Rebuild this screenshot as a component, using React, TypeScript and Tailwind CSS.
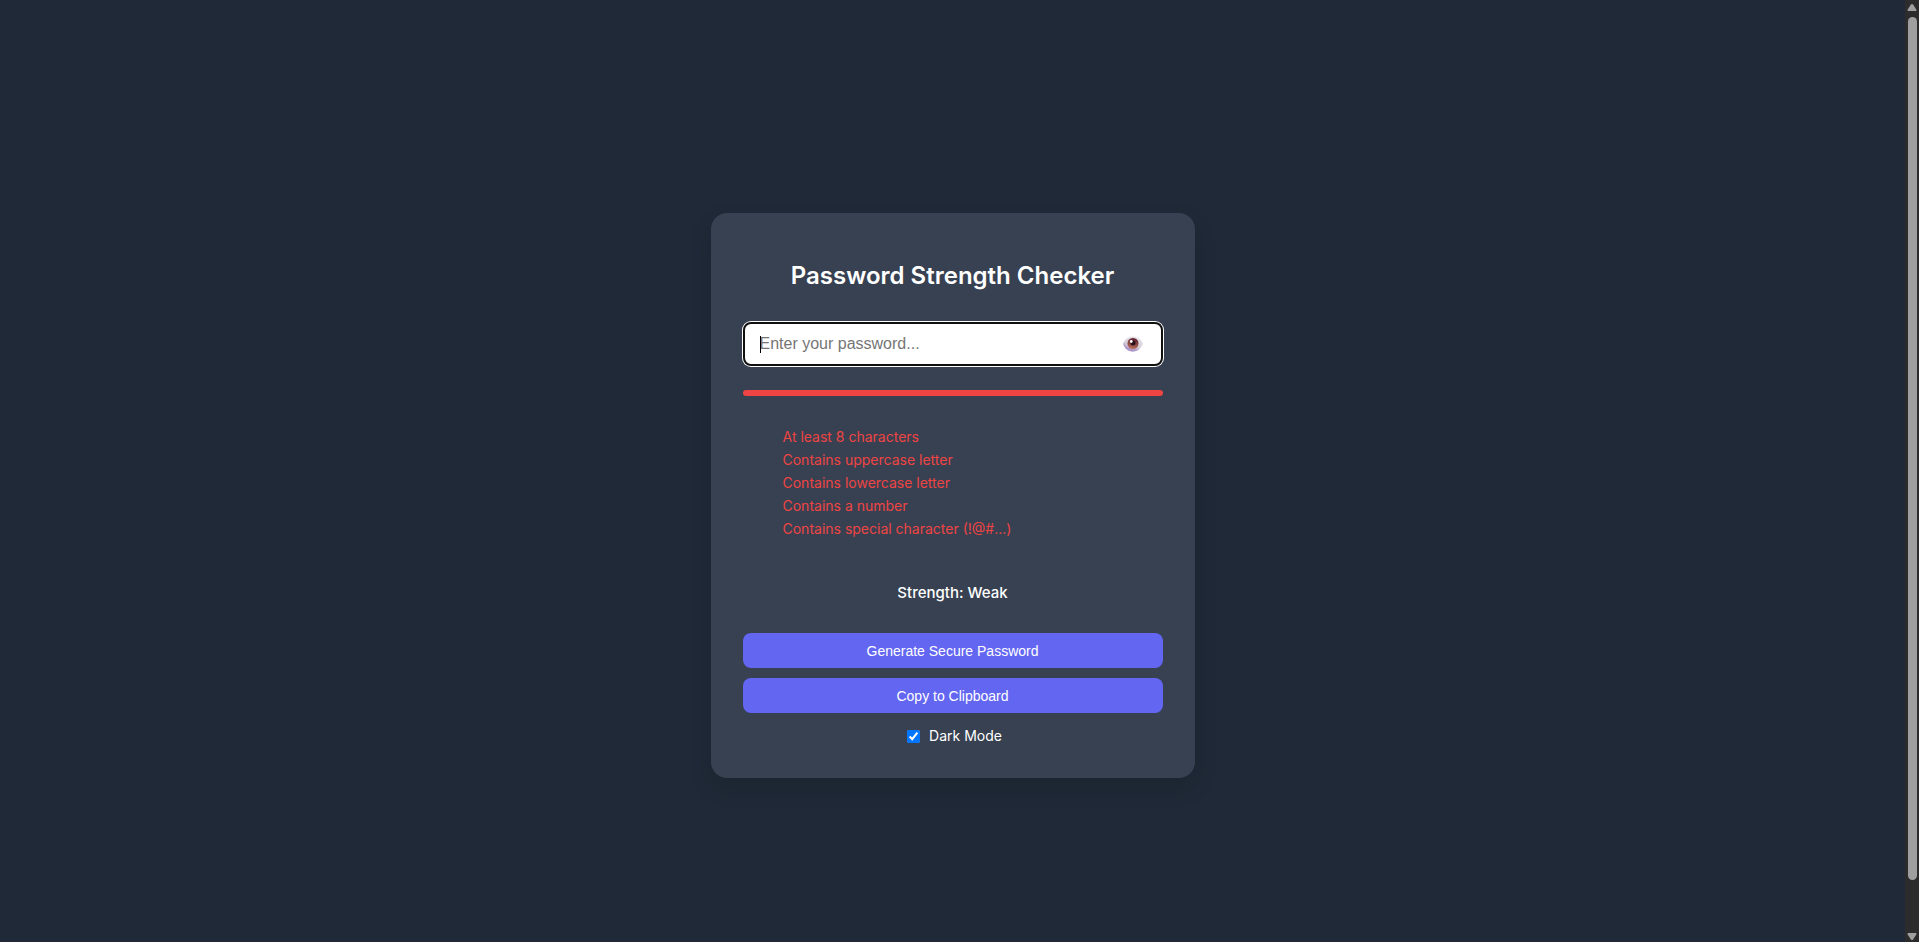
import { useEffect, useRef, useState } from "react";

const RULES: { label: string; test: (v: string) => boolean }[] = [
  { label: "At least 8 characters", test: (v) => v.length >= 8 },
  { label: "Contains uppercase letter", test: (v) => /[A-Z]/.test(v) },
  { label: "Contains lowercase letter", test: (v) => /[a-z]/.test(v) },
  { label: "Contains a number", test: (v) => /\d/.test(v) },
  { label: "Contains special character (!@#...)", test: (v) => /[^A-Za-z0-9]/.test(v) },
];

const ALPHABET = "ABCDEFGHIJKLMNOPQRSTUVWXYZabcdefghijklmnopqrstuvwxyz0123456789!@#$%^&*";

function generatePassword() {
  const bytes = crypto.getRandomValues(new Uint32Array(12));
  return "Aa1!" + Array.from(bytes, (b) => ALPHABET[b % ALPHABET.length]).join("");
}

function EyeIcon() {
  return (
    <svg viewBox="0 0 40 32" className="h-4 w-5" aria-hidden="true">
      <defs>
        <linearGradient id="eye-white" x1="0.8" y1="0" x2="0.3" y2="1">
          <stop offset="0" stopColor="#eae6e9" />
          <stop offset="0.55" stopColor="#d6cfda" />
          <stop offset="1" stopColor="#b09acb" />
        </linearGradient>
        <linearGradient id="eye-iris" x1="0.6" y1="0" x2="0.4" y2="1">
          <stop offset="0" stopColor="#5e1a2e" />
          <stop offset="0.5" stopColor="#8a4642" />
          <stop offset="1" stopColor="#bb705e" />
        </linearGradient>
      </defs>
      <path d="M0 15C4 6 12 1 20 1s16 5 20 14c-4 10-11 16-20 16S3 25 0 15Z" fill="url(#eye-white)" />
      <path d="M0 15c3 11 11 16 20 16 5 0 9-2 12-5-10 2-24 0-32-11Z" fill="#a58fc4" opacity="0.7" />
      <circle cx="20" cy="15" r="11" fill="url(#eye-iris)" />
      <circle cx="20" cy="14" r="5" fill="#2a1018" />
      <circle cx="16.500" cy="11" r="2.8" fill="#fff" />
    </svg>
  );
}

function ScrollRail({ ratio, offset }: { ratio: number; offset: number }) {
  return (
    <div className="flex h-full w-[14px] shrink-0 flex-col items-center bg-[#2c2c2c]" aria-hidden="true">
      <svg viewBox="0 0 14 17" className="h-[17px] w-[14px] shrink-0">
        <path d="M7 4c.5 0 .8.2 1.100.600l3.200 4.900c.5.8.1 1.500-.8 1.500h-7c-.9 0-1.300-.7-.8-1.500l3.200-4.900c.3-.4.600-.600 1.100-.600Z" fill="#9f9f9f" />
      </svg>
      <div className="w-[9px] min-h-0 flex-1">
        <div style={{ height: `${offset * 100}%` }} />
        <div className="rounded-full bg-[#9f9f9f]" style={{ height: `${ratio * 100}%` }} />
      </div>
      <svg viewBox="0 0 14 17" className="h-[17px] w-[14px] shrink-0">
        <path d="M7 15c.5 0 .8-.2 1.100-.600l3.200-4.900c.5-.8.1-1.500-.8-1.500h-7c-.9 0-1.300.7-.8 1.500l3.200 4.900c.3.4.600.600 1.100.600Z" fill="#9f9f9f" />
      </svg>
    </div>
  );
}

export default function App() {
  const [password, setPassword] = useState("");
  const [visible, setVisible] = useState(false);
  const [dark, setDark] = useState(true);
  const [rail, setRail] = useState({ ratio: 1, offset: 0 });
  const scroller = useRef<HTMLDivElement>(null);

  const measure = () => {
    const el = scroller.current;
    if (el) setRail({ ratio: el.clientHeight / el.scrollHeight, offset: el.scrollTop / el.scrollHeight });
  };

  useEffect(() => {
    measure();
    window.addEventListener("resize", measure);
    return () => window.removeEventListener("resize", measure);
  }, []);

  const score = RULES.filter((r) => r.test(password)).length;
  const strength = score <= 2 ? "Weak" : score <= 4 ? "Medium" : "Strong";
  const barColor = score <= 2 ? "bg-[#ef4444]" : score <= 4 ? "bg-[#f59e0b]" : "bg-[#10b981]";
  const buttonClass =
    "h-[35px] w-full cursor-pointer rounded-lg bg-[#6366f1] pt-px font-['Liberation_Sans',Arial,sans-serif] text-sm text-white hover:bg-[#4f46e5]";

  return (
    <div
      className={`flex h-screen font-[Inter,sans-serif] ${dark ? "bg-[#1f2937] text-white" : "bg-[#f3f4f6] text-[#1f2937]"}`}
    >
      <div ref={scroller} onScroll={measure} className="h-full min-w-0 flex-1 overflow-y-auto [scrollbar-width:none]">
        <main className="flex min-h-[calc(100vh+49px)] items-center justify-center py-6">
          <section
            className={`w-full max-w-[484px] rounded-2xl p-8 shadow-[0_10px_25px_rgba(0,0,0,0.1)] ${dark ? "bg-[#374151]" : "bg-white"}`}
          >
            <h1 className="mt-4 mb-[31px] text-center text-2xl leading-[30px] font-semibold">
              Password Strength Checker
            </h1>

            <div className="relative">
              <input
                type={visible ? "text" : "password"}
                aria-label="Password"
                placeholder="Enter your password..."
                autoFocus
                value={password}
                onChange={(e) => setPassword(e.target.value)}
                className="h-11 w-full rounded-lg border-2 border-[#101010] bg-white pr-12 pl-[15px] font-['Liberation_Sans',Arial,sans-serif] text-base text-black caret-transparent ring-1 ring-white outline-none not-placeholder-shown:caret-black placeholder:text-[#757575]"
              />
              {password === "" && (
                <span className="pointer-events-none absolute top-[14px] left-[17px] h-[17px] w-px bg-black" />
              )}
              <button
                type="button"
                aria-label="Show password"
                onClick={() => setVisible(!visible)}
                className="absolute inset-y-0 right-5 flex cursor-pointer items-center"
              >
                <EyeIcon />
              </button>
            </div>

            <div className={`mt-6 h-[6px] w-full rounded-full ${barColor}`} />

            <ul className="mt-[29px] pl-10 text-sm leading-[23px]">
              {RULES.map((r) => (
                <li key={r.label} className={r.test(password) ? "text-[#10b981]" : "text-[#ef4444]"}>
                  {r.label}
                </li>
              ))}
            </ul>

            <p className="mt-[41px] text-center text-[15px] leading-6 font-medium">Strength: {strength}</p>

            <div className="mt-7 flex flex-col gap-[10px]">
              <button type="button" className={buttonClass} onClick={() => setPassword(generatePassword())}>
                Generate Secure Password
              </button>
              <button type="button" className={buttonClass} onClick={() => navigator.clipboard?.writeText(password)}>
                Copy to Clipboard
              </button>
            </div>

            <label className="mt-[13px] flex items-center justify-center gap-[9px] text-sm">
              <input
                type="checkbox"
                checked={dark}
                onChange={(e) => setDark(e.target.checked)}
                className="ml-1 size-[13px] accent-[#0075ff]"
              />
              Dark Mode
            </label>
          </section>
        </main>
      </div>
      <ScrollRail ratio={rail.ratio} offset={rail.offset} />
    </div>
  );
}
